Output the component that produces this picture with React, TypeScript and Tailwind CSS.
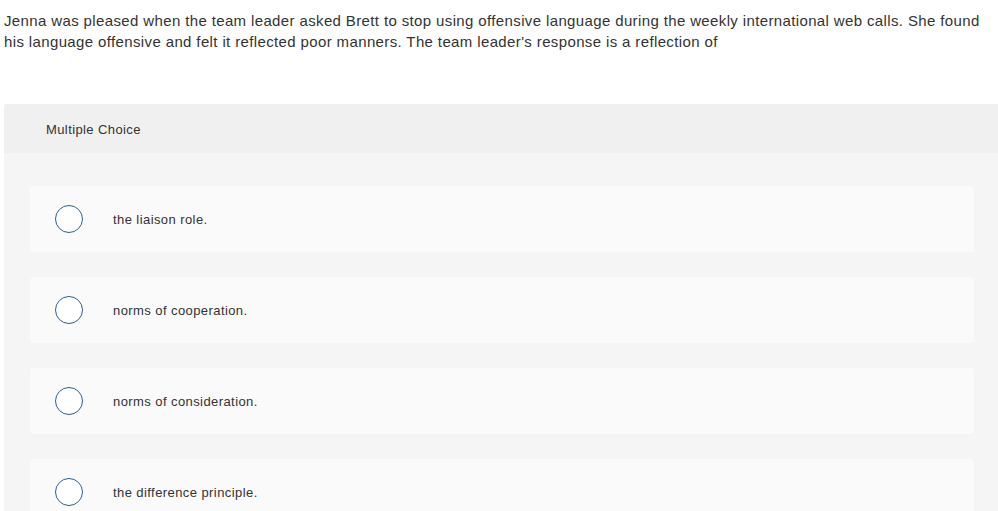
import React from "react";

const options = [
  "the liaison role.",
  "norms of cooperation.",
  "norms of consideration.",
  "the difference principle.",
];

export default function App() {
  return (
    <div
      className="w-[998px] h-[511px] overflow-hidden bg-white text-[#333333]"
      style={{ fontFamily: "'Liberation Sans', Arial, sans-serif" }}
    >
      <p className="pl-[4px] pr-[10px] pt-[10px] text-[15px] leading-[21px] tracking-[0.37px] text-[#333333]">
        Jenna was pleased when the team leader asked Brett to stop using offensive language during the weekly international web calls. She found his language offensive and felt it reflected poor manners. The team leader's response is a reflection of
      </p>
      <div className="ml-[4px] mt-[52px] rounded-tl-[3px] bg-[#f5f5f5]">
        <div className="flex h-[49px] items-center rounded-tl-[3px] bg-[#f0f0f0] pl-[42px] pt-[2px] text-[13px] tracking-[0.4px] text-[#333333]">
          Multiple Choice
        </div>
        <div className="flex flex-col gap-[25px] pl-[26px] pr-[24px] pt-[33px] pb-[20px]">
          {options.map((o) => (
            <div
              key={o}
              className="flex h-[66px] items-center rounded-[4px] bg-[#fafafa] pl-[25px]"
            >
              <span className="box-border h-[28px] w-[28px] shrink-0 rounded-full border-[1.5px] border-[#2d5f8f] bg-white" />
              <span className="ml-[30px] pt-[1px] text-[13px] tracking-[0.42px] text-[#333333]">{o}</span>
            </div>
          ))}
        </div>
      </div>
    </div>
  );
}
